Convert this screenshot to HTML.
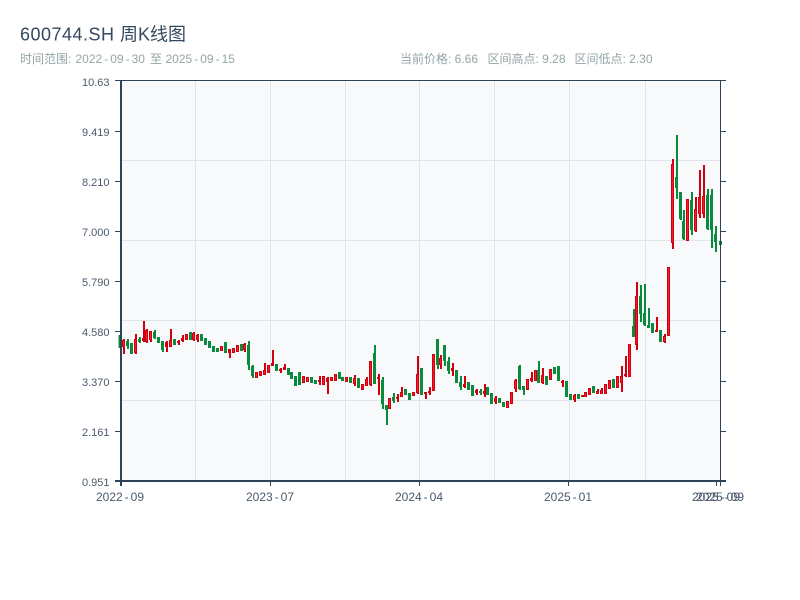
<!DOCTYPE html>
<html lang="zh">
<head>
<meta charset="utf-8">
<title>600744.SH 周K线图</title>
<style>
html,body{margin:0;padding:0;background:#fff;width:800px;height:600px;overflow:hidden}
svg{display:block}
text{font-family:"Liberation Sans","Noto Sans CJK SC",sans-serif}
.y{font-size:11px;fill:#4a5a6c;text-anchor:end}
.x{font-size:12px;fill:#4a5a6c;text-anchor:middle}
.s{font-size:12px;fill:#95a5a6}
</style>
</head>
<body>
<svg width="800" height="600" viewBox="0 0 800 600" xmlns="http://www.w3.org/2000/svg">
<rect width="800" height="600" fill="#fff"/>
<text x="20" y="40.5" font-size="18" fill="#34495e" textLength="94" lengthAdjust="spacing">600744.SH</text>
<text x="120" y="40.5" font-size="18" fill="#34495e">周</text>
<text x="138" y="40.5" font-size="18" fill="#34495e">K</text>
<text x="150" y="40.5" font-size="18" fill="#34495e">线</text>
<text x="168" y="40.5" font-size="18" fill="#34495e">图</text>
<text class="s" x="20" y="63">时间范围:</text>
<text class="s" x="75.5" y="63">2022<tspan dx="2">-</tspan><tspan dx="2">09</tspan><tspan dx="2">-</tspan><tspan dx="2">30</tspan></text>
<text class="s" x="150" y="63">至</text>
<text class="s" x="165.5" y="63">2025<tspan dx="2">-</tspan><tspan dx="2">09</tspan><tspan dx="2">-</tspan><tspan dx="2">15</tspan></text>
<text class="s" x="400" y="63">当前价格: 6.66</text>
<text class="s" x="487.5" y="63">区间高点: 9.28</text>
<text class="s" x="574.5" y="63">区间低点: 2.30</text>

<rect x="121" y="81" width="600" height="400" fill="#f7f9fb"/>
<path d="M121 160.5H720M121 240.5H720M121 320.5H720M121 400.5H720M195.5 81V481M270.5 81V481M345.5 81V481M419.5 81V481M494.5 81V481M569.5 81V481M645.5 81V481" stroke="#e1e4ea" stroke-width="1" fill="none"/>

<path fill="none" stroke="#0a8a3c" stroke-width="2" d="M128 339V349M163 341V352M140 337V343M155 330V339M249 341V370M253 365V378M375 345V384M383 377V409M387 405V425M394 393V403M438 339V369M445 345V366M449 357V374M461 376V390M481 389V395M520 365V390M524 386V395M539 361V383M634 309V337M641 285V322M645 284V326M649 308V328M677 135V199M681 192V220M684 210V240M692 192V235M708 189V230M712 189V248M716 226V252"/>
<path fill="none" stroke="#0a8a3c" stroke-width="3" d="M120 335V348M127.5 341V346M131.5 343V354M139.5 339V342M154.5 332V338M158.5 337V343M162.5 341V350M174.5 339V345M190.5 332V340M201.5 334V341M205.5 338V345M209.5 341V348M213.5 346V352M217.5 348V352M225.5 342V353M241.5 344V351M248.5 345V365M252.5 366V376M276.5 364V371M288.5 368V375M291.5 372V379M295.5 376V386M299.5 372V385M311.5 377V383M315.5 380V384M339.5 372V379M342.5 377V381M350.5 377V383M358.5 378V388M374.5 353V384M382.5 380V404M386.5 405V410M393.5 397V401M405.5 389V395M409.5 393V400M421.5 368V395M437.5 339V365M444.5 345V361M448.5 361V371M456.5 370V383M460.5 382V387M468.5 382V390M472.5 385V396M480.5 391V393M487.5 387V395M491.5 393V404M499.5 398V403M503.5 402V407M519.5 366V389M523.5 386V390M538.5 370V383M546.5 376V385M554.5 367V374M558.5 366V381M566.5 381V397M570.5 394V400M578.5 394V399M593.5 386V393M613.5 379V388M633.5 326V337M640.5 296V314M644.5 313V325M648.5 325V328M652.5 323V333M660.5 330V342M676.5 177V188M680.5 192V219M683.5 221V239M691.5 200V230M707.5 195V229M711.5 195V230M715.5 234V242M720.5 241V245"/>

<path fill="none" stroke="#d0000f" stroke-width="2" d="M124 339V354M136 334V354M144 321V342M147 329V343M151 331V342M167 341V352M171 329V347M179 340V345M183 335V342M194 332V341M198 334V342M230 349V358M245 343V352M265 363V375M273 350V366M281 368V373M285 364V370M320 376V385M328 377V394M355 375V386M367 377V386M371 361V386M379 374V395M398 394V402M402 387V397M418 356V394M426 392V399M430 387V395M441 355V369M453 363V376M465 376V388M477 389V395M485 384V397M496 396V404M516 379V392M532 372V382M543 368V384M563 380V387M575 394V402M598 389V394M602 388V394M622 366V392M626 356V377M637 282V350M657 317V332M665 334V343M673 159V249M696 197V232M700 170V218M704 165V218"/>
<path fill="none" stroke="#d0000f" stroke-width="3" d="M123.5 340V347M135.5 339V353M143.5 338V341M146.5 330V342M150.5 331V340M166.5 342V347M170.5 340V347M178.5 341V343M182.5 338V341M186.5 334V340M193.5 333V340M197.5 335V340M221.5 346V351M229.5 349V353M233.5 348V353M237.5 345V352M244.5 344V350M256.5 372V378M260.5 371V376M264.5 370V375M268.5 365V373M272.5 363V366M280.5 369V371M284.5 367V370M303.5 376V383M307.5 377V382M319.5 380V382M323.5 376V385M327.5 378V382M331.5 377V381M335.5 374V381M346.5 377V382M354.5 378V384M362.5 384V390M366.5 379V386M370.5 361V385M378.5 377V379M389.5 398V409M397.5 397V399M401.5 392V397M413.5 392V396M417.5 374V393M425.5 392V394M429.5 391V393M433.5 354V391M440.5 358V365M452.5 368V371M464.5 384V387M476.5 390V393M484.5 391V394M495.5 398V402M507.5 401V408M511.5 392V404M515.5 380V389M527.5 379V390M531.5 378V381M535.5 370V381M542.5 375V383M550.5 369V380M562.5 381V383M574.5 395V400M582.5 395V397M585.5 392V397M589.5 388V395M597.5 391V394M601.5 390V394M605.5 384V394M609.5 380V389M617.5 376V388M621.5 376V383M625.5 374V376M629.5 344V377M636.5 296V345M656.5 330V332M664.5 336V342M668.5 267V336M672.5 164V243M687.5 199V241M695.5 209V231M699.5 197V214M703.5 196V214"/>
<path fill="none" stroke="#f41c28" stroke-width="1" d="M123.5 341V346M135.5 340V352M146.5 331V341M150.5 332V339M170.5 341V346M186.5 335V339M193.5 334V339M197.5 336V339M221.5 347V350M233.5 349V352M237.5 346V351M244.5 345V349M256.5 373V377M260.5 372V375M264.5 371V374M268.5 366V372M303.5 377V382M307.5 378V381M323.5 377V384M331.5 378V380M335.5 375V380M346.5 378V381M354.5 379V383M362.5 385V389M366.5 380V385M370.5 362V384M389.5 399V408M401.5 393V396M413.5 393V395M417.5 375V392M433.5 355V390M440.5 359V364M495.5 399V401M507.5 402V407M511.5 393V403M515.5 381V388M527.5 380V389M535.5 371V380M542.5 376V382M550.5 370V379M574.5 396V399M585.5 393V396M589.5 389V394M597.5 392V393M601.5 391V393M605.5 385V393M609.5 381V388M617.5 377V387M621.5 377V382M629.5 345V376M636.5 297V344M664.5 337V341M668.5 268V335M672.5 165V242M687.5 200V240M695.5 210V230M699.5 198V213M703.5 197V213"/>

<g fill="#2f4358">
<rect x="120" y="81" width="2" height="405"/>
<rect x="115" y="80" width="611" height="1"/>
<rect x="720" y="81" width="1" height="405"/>
<rect x="115" y="480" width="611" height="2"/>
<rect x="115" y="131" width="5" height="1"/><rect x="115" y="181" width="5" height="1"/><rect x="115" y="231" width="5" height="1"/><rect x="115" y="281" width="5" height="1"/><rect x="115" y="331" width="5" height="1"/><rect x="115" y="381" width="5" height="1"/><rect x="115" y="431" width="5" height="1"/>
<rect x="721" y="131" width="5" height="1"/><rect x="721" y="181" width="5" height="1"/><rect x="721" y="231" width="5" height="1"/><rect x="721" y="281" width="5" height="1"/><rect x="721" y="331" width="5" height="1"/><rect x="721" y="381" width="5" height="1"/><rect x="721" y="431" width="5" height="1"/>
<rect x="270" y="482" width="1" height="4"/><rect x="419" y="482" width="1" height="4"/><rect x="568" y="482" width="1" height="4"/><rect x="716" y="482" width="1" height="4"/>
</g>

<text class="y" x="109.5" y="86">10.63</text>
<text class="y" x="109.5" y="136">9.419</text>
<text class="y" x="109.5" y="186">8.210</text>
<text class="y" x="109.5" y="236">7.000</text>
<text class="y" x="109.5" y="286">5.790</text>
<text class="y" x="109.5" y="336">4.580</text>
<text class="y" x="109.5" y="386">3.370</text>
<text class="y" x="109.5" y="436">2.161</text>
<text class="y" x="109.5" y="486">0.951</text>

<text class="x" x="120" y="501">2022<tspan dx="2">-</tspan><tspan dx="2">09</tspan></text>
<text class="x" x="270" y="501">2023<tspan dx="2">-</tspan><tspan dx="2">07</tspan></text>
<text class="x" x="419" y="501">2024<tspan dx="2">-</tspan><tspan dx="2">04</tspan></text>
<text class="x" x="568" y="501">2025<tspan dx="2">-</tspan><tspan dx="2">01</tspan></text>
<text class="x" x="716" y="501">2025<tspan dx="2">-</tspan><tspan dx="2">09</tspan></text>
<text class="x" x="720" y="501">2025<tspan dx="2">-</tspan><tspan dx="2">09</tspan></text>
</svg>
</body>
</html>
